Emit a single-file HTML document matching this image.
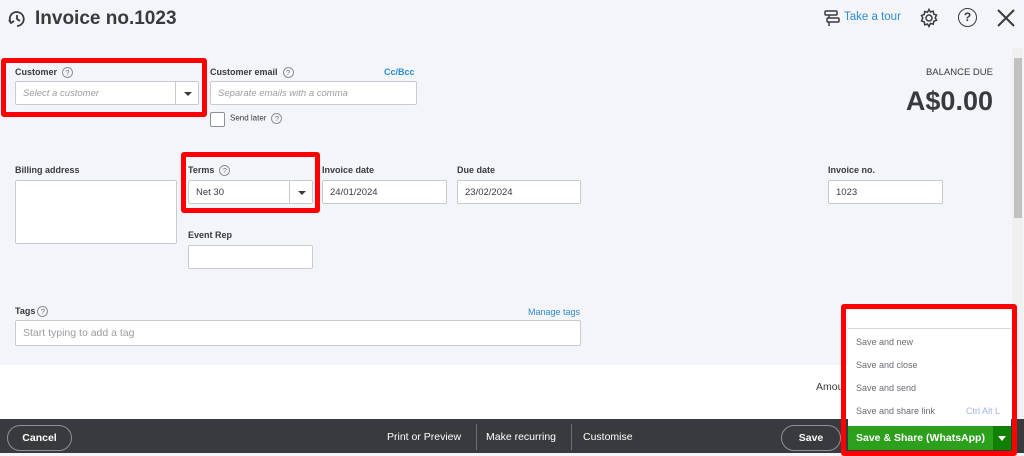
<!DOCTYPE html><html><head><style>
*{box-sizing:border-box;margin:0;padding:0}
body{width:1024px;height:453px;overflow:hidden;background:#f4f5f8;font-family:"Liberation Sans",sans-serif;color:#393a3d;position:relative}
.a{position:absolute}
.lbl{font-size:9px;font-weight:bold;color:#393a3d}
.in{background:#fff;border:1px solid #c9cbd0;border-radius:2px;font-size:9.5px;color:#393a3d;padding-left:7px;display:flex;align-items:center}
.ph{color:#9a9ca1;font-style:italic}
.q{display:inline-block;width:11px;height:11px;border:1px solid #8d9096;border-radius:50%;font-size:7.5px;text-align:center;line-height:9px;color:#6b6c72;font-weight:normal;margin-left:5px;vertical-align:middle}
.red{border:5px solid #f00;border-radius:3px}
.dd{position:absolute;right:0;top:0;bottom:0;width:23px;border-left:1px solid #c9cbd0}
.dd:after{content:"";position:absolute;left:8px;top:10px;border:4px solid transparent;border-top:4px solid #393a3d;border-bottom:0}
.mi{position:absolute;left:856px;font-size:9px;color:#6b6c72}
</style></head><body>
<svg class="a" style="left:7px;top:9px" width="20" height="20" viewBox="0 0 20 20" fill="none" stroke="#393a3d" stroke-width="1.8"><path d="M4 14A7 7 0 1 1 10 17"/><path d="M10 6v4l3 2"/><path d="M2 11l2 3 3-2"/></svg>
<div class="a" style="left:35px;top:8px;font-size:19px;font-weight:bold;color:#393a3d">Invoice no.1023</div>
<svg class="a" style="left:823px;top:9px" width="18" height="18" viewBox="0 0 18 18" fill="none" stroke="#393a3d" stroke-width="1.5"><rect x="2" y="2" width="12" height="4" rx="1"/><rect x="4" y="9" width="12" height="4" rx="1"/><path d="M6 6v3M6 13v4"/></svg>
<div class="a" style="left:844px;top:11px;font-size:11.5px;color:#2d8ad5">Take a tour</div>
<svg class="a" style="left:919px;top:8px" width="20" height="20" viewBox="0 0 20 20" fill="none" stroke="#393a3d" stroke-width="1.5"><circle cx="10" cy="10" r="3"/><path d="M10 1.5l1.5 2.5 2.8-.8.4 2.9 2.8 1-1.3 2.6 1.3 2.6-2.8 1-.4 2.9-2.8-.8L10 18.5l-1.5-2.5-2.8.8-.4-2.9-2.8-1L3.8 10 2.5 7.4l2.8-1 .4-2.9 2.8.8z"/></svg>
<div class="a" style="left:958px;top:8px;width:19px;height:19px;border:1.6px solid #393a3d;border-radius:50%;font-size:12px;font-weight:bold;text-align:center;line-height:16px">?</div>
<svg class="a" style="left:996px;top:8px" width="20" height="20" viewBox="0 0 20 20" stroke="#393a3d" stroke-width="2"><path d="M2 2l16 16M18 2L2 18"/></svg>

<div class="a red" style="left:1px;top:58px;width:206px;height:59px"></div>
<div class="a lbl" style="left:15px;top:67px">Customer<span class="q">?</span></div>
<div class="a in" style="left:15px;top:81px;width:184px;height:24px"><span class="ph">Select a customer</span><div class="dd"></div></div>
<div class="a lbl" style="left:210px;top:67px">Customer email<span class="q">?</span></div>
<div class="a" style="left:384px;top:67px;font-size:9px;font-weight:bold;color:#2d8ad5">Cc/Bcc</div>
<div class="a in" style="left:210px;top:81px;width:207px;height:24px"><span class="ph">Separate emails with a comma</span></div>
<div class="a" style="left:210px;top:112px;width:15px;height:15px;border:1px solid #8d9096;background:#fff;border-radius:2px"></div>
<div class="a" style="left:230px;top:113px;font-size:8px;color:#393a3d">Send later<span class="q">?</span></div>

<div class="a" style="right:31px;top:67px;font-size:9.5px;color:#393a3d">BALANCE DUE</div>
<div class="a" style="right:31px;top:86px;font-size:27px;font-weight:bold;color:#393a3d">A$0.00</div>
<div class="a" style="left:1012px;top:48px;width:11px;height:372px;background:#f0f0f0"></div>
<div class="a" style="left:1014px;top:58px;width:8px;height:160px;background:#c1c1c1"></div>

<div class="a lbl" style="left:15px;top:165px">Billing address</div>
<div class="a in" style="left:15px;top:180px;width:162px;height:64px"></div>
<div class="a red" style="left:181px;top:152px;width:139px;height:61px"></div>
<div class="a lbl" style="left:188px;top:165px">Terms<span class="q">?</span></div>
<div class="a in" style="left:188px;top:180px;width:125px;height:24px">Net 30<div class="dd"></div></div>
<div class="a lbl" style="left:322px;top:165px">Invoice date</div>
<div class="a in" style="left:322px;top:180px;width:125px;height:24px">24/01/2024</div>
<div class="a lbl" style="left:457px;top:165px">Due date</div>
<div class="a in" style="left:457px;top:180px;width:124px;height:24px">23/02/2024</div>
<div class="a lbl" style="left:828px;top:165px">Invoice no.</div>
<div class="a in" style="left:828px;top:180px;width:115px;height:24px">1023</div>
<div class="a lbl" style="left:188px;top:230px">Event Rep</div>
<div class="a in" style="left:188px;top:245px;width:125px;height:24px"></div>

<div class="a lbl" style="left:15px;top:306px">Tags<span class="q" style="margin-left:2px">?</span></div>
<div class="a" style="left:528px;top:307px;font-size:9px;color:#2d8ad5">Manage tags</div>
<div class="a in" style="left:15px;top:320px;width:566px;height:26px;font-size:10.5px;color:#9a9ca1">Start typing to add a tag</div>

<div class="a" style="left:0;top:365px;width:1012px;height:55px;background:#fff"></div>
<div class="a" style="left:816px;top:381px;font-size:10.5px">Amou</div>

<div class="a" style="left:0;top:419px;width:1024px;height:34px;background:#393a3d"></div>
<div class="a" style="left:7px;top:425px;width:65px;height:26px;border:1px solid #8d9096;border-radius:13px;color:#fff;font-size:10.5px;font-weight:bold;text-align:center;line-height:24px">Cancel</div>
<div class="a" style="left:387px;top:431px;color:#fff;font-size:10.5px">Print or Preview</div>
<div class="a" style="left:476px;top:424px;width:1px;height:26px;background:#6b6c72"></div>
<div class="a" style="left:486px;top:431px;color:#fff;font-size:10.5px">Make recurring</div>
<div class="a" style="left:571px;top:424px;width:1px;height:26px;background:#6b6c72"></div>
<div class="a" style="left:583px;top:431px;color:#fff;font-size:10.5px">Customise</div>
<div class="a" style="left:781px;top:425px;width:60px;height:26px;border:1px solid #8d9096;border-radius:13px;color:#fff;font-size:10.5px;font-weight:bold;text-align:center;line-height:24px">Save</div>

<div class="a" style="left:848px;top:310px;width:163px;height:116px;background:#fff"></div>
<div class="a" style="left:848px;top:328px;width:163px;height:1px;background:#d4d7dc"></div>
<div class="mi" style="top:337px">Save and new</div>
<div class="mi" style="top:360px">Save and close</div>
<div class="mi" style="top:383px">Save and send</div>
<div class="mi" style="top:406px">Save and share link</div>
<div class="a" style="left:966px;top:406px;font-size:9px;color:#a3b4e0">Ctrl Alt L</div>
<div class="a" style="left:848px;top:426px;width:145px;height:24px;background:#2ca01c;color:#fff;font-size:10.5px;font-weight:bold;line-height:24px;padding-left:8px">Save &amp; Share (WhatsApp)</div>
<div class="a" style="left:993px;top:426px;width:18px;height:24px;background:#108000"></div>
<div class="a" style="left:998px;top:436px;border:4px solid transparent;border-top:5px solid #fff;border-bottom:0"></div>
<div class="a red" style="left:841px;top:304px;width:176px;height:152px"></div>
</body></html>
